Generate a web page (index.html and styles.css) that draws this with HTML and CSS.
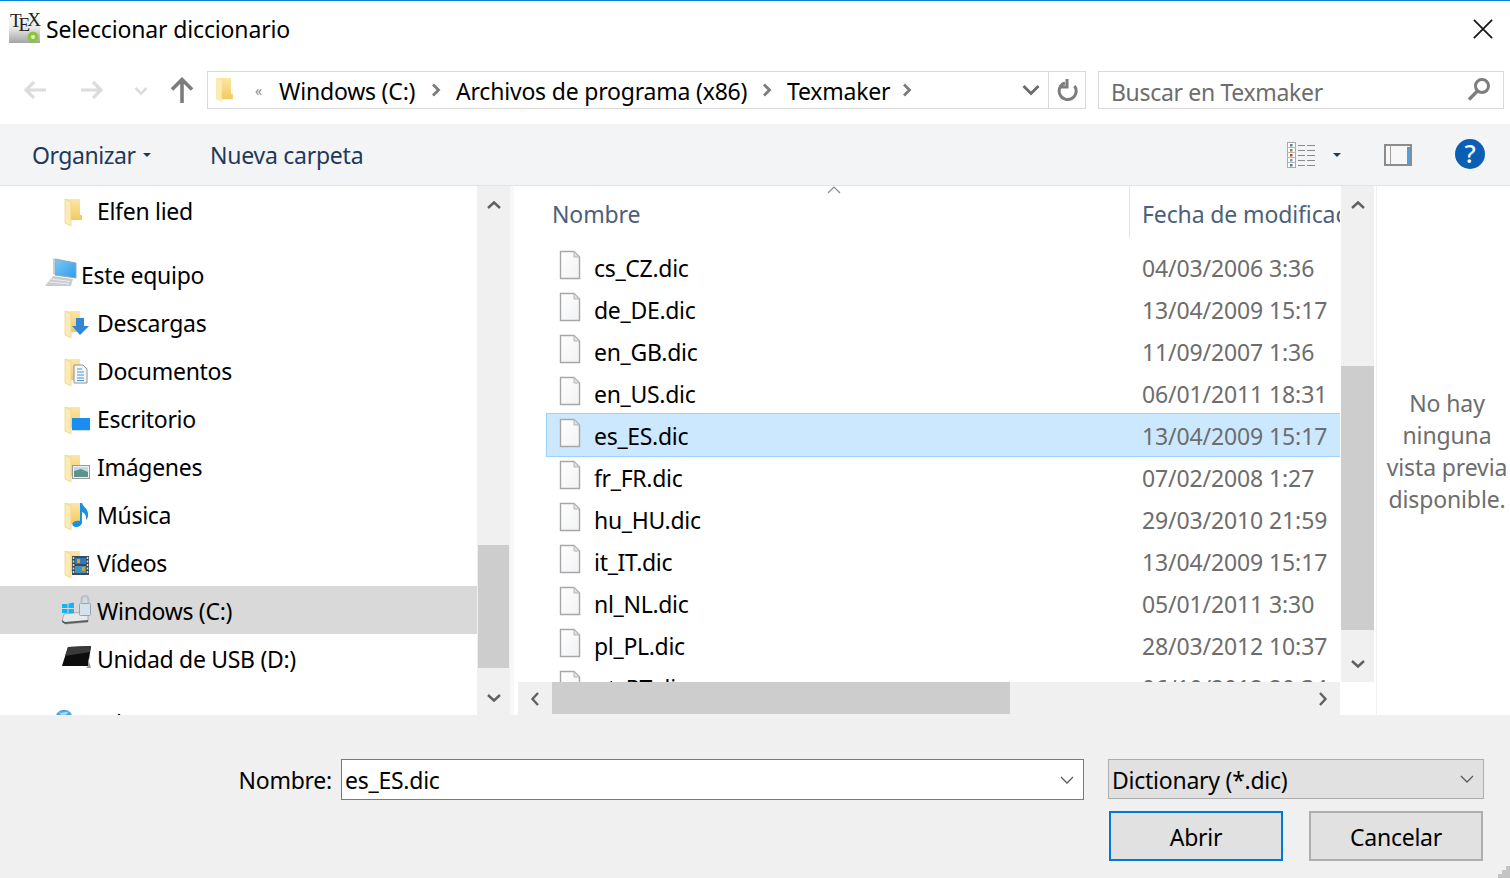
FILE: index.html
```html
<!DOCTYPE html>
<html lang="es">
<head>
<meta charset="utf-8">
<title>Seleccionar diccionario</title>
<link rel="stylesheet" href="styles.css">
</head>
<body>
<svg class="defs" width="0" height="0" aria-hidden="true">
  <defs>
    <linearGradient id="fy" x1="0" y1="0" x2="0" y2="1"><stop offset="0" stop-color="#fde7a6"/><stop offset="1" stop-color="#f3c95f"/></linearGradient>
    <linearGradient id="fp" x1="0" y1="0" x2="1" y2="1"><stop offset="0" stop-color="#ffffff"/><stop offset="1" stop-color="#f1f2f4"/></linearGradient>
    <linearGradient id="mon" x1="0" y1="0" x2="1" y2="1"><stop offset="0" stop-color="#7cc9f7"/><stop offset="1" stop-color="#2f9bea"/></linearGradient>
    <symbol id="folder" viewBox="0 0 34 30">
      <path d="M2 2H17V18H19V23H2Z" fill="url(#fy)"/>
      <path d="M2 2L8 5V29L2 26Z" fill="#fcebb4" stroke="#efd086" stroke-width=".7"/>
    </symbol>
    <symbol id="file" viewBox="0 0 22 30">
      <path d="M1.500 1.500H15L20.500 7V28.500H1.500Z" fill="url(#fp)" stroke="#a6a6a6" stroke-width="1.400"/>
      <path d="M15 1.500V7H20.500Z" fill="#e2e2e2" stroke="#b5b5b5"/>
    </symbol>
    <symbol id="chev" viewBox="0 0 16 10">
      <path d="M2 8L8 2.500L14 8" fill="none" stroke="#606060" stroke-width="2.400"/>
    </symbol>
  </defs>
</svg>

<div class="dialog">
  <header class="titlebar">
    <svg class="tex" viewBox="0 0 32 32">
      <defs><linearGradient id="tg" x1="0" y1="0" x2="0" y2="1"><stop offset="0" stop-color="#ffffff"/><stop offset=".5" stop-color="#e8e8e8"/><stop offset="1" stop-color="#a4a4a4"/></linearGradient></defs>
      <rect y="1" width="31" height="30" fill="url(#tg)"/>
      <text x="1" y="15" class="tex-t">T<tspan dy="4">E</tspan><tspan dy="-5">X</tspan></text>
      <circle cx="24" cy="25" r="5.500" fill="#8cc63f"/><circle cx="24" cy="25" r="2" fill="#e4f3c6"/>
    </svg>
    <span class="title">Seleccionar diccionario</span>
    <svg class="close" viewBox="0 0 22 22"><path d="M1 1L21 21M21 1L1 21" stroke="#1a1a1a" stroke-width="2" fill="none"/></svg>
  </header>

  <div class="addrbar">
    <svg class="nav-arrow back" viewBox="0 0 24 20"><path d="M23 10H3M11 2L3 10L11 18" fill="none" stroke="#dcdcdc" stroke-width="3.200"/></svg>
    <svg class="nav-arrow fwd" viewBox="0 0 24 20"><path d="M1 10H21M13 2L21 10L13 18" fill="none" stroke="#dcdcdc" stroke-width="3.200"/></svg>
    <svg class="hist" viewBox="0 0 14 10"><path d="M1.500 2L7 7.500L12.500 2" fill="none" stroke="#dcdcdc" stroke-width="2.600"/></svg>
    <svg class="up" viewBox="0 0 24 26"><path d="M12 26V3M2 12.500L12 2.500L22 12.500" fill="none" stroke="#7d7d7d" stroke-width="3.600"/></svg>
    <div class="crumbs">
      <svg class="crumb-folder" viewBox="0 0 20 28"><path d="M1 1H17V18H19V24H1Z" fill="url(#fy)"/><path d="M1 1L7 4V27L1 24Z" fill="#fcebb4"/></svg>
      <span class="more">«</span>
      <span class="crumb c1">Windows (C:)</span>
      <svg class="sep" viewBox="0 0 10 14"><path d="M2 1.500L7.500 7L2 12.500" fill="none" stroke="#7b7b7b" stroke-width="2.800"/></svg>
      <span class="crumb c2">Archivos de programa (x86)</span>
      <svg class="sep" viewBox="0 0 10 14"><path d="M2 1.500L7.500 7L2 12.500" fill="none" stroke="#7b7b7b" stroke-width="2.800"/></svg>
      <span class="crumb c3">Texmaker</span>
      <svg class="sep" viewBox="0 0 10 14"><path d="M2 1.500L7.500 7L2 12.500" fill="none" stroke="#7b7b7b" stroke-width="2.800"/></svg>
      <svg class="drop" viewBox="0 0 18 12"><path d="M1.500 2L9 9.500L16.500 2" fill="none" stroke="#6d6d6d" stroke-width="3"/></svg>
      <span class="refresh-box">
        <svg class="refresh" viewBox="0 0 22 24"><path d="M17.500 8A8.500 8.500 0 1 1 8 5" fill="none" stroke="#7d7d7d" stroke-width="3"/><path d="M10 1V9H2" fill="none" stroke="#7d7d7d" stroke-width="3"/></svg>
      </span>
    </div>
    <div class="search">
      <span class="search-text">Buscar en Texmaker</span>
      <svg class="lens" viewBox="0 0 24 24"><circle cx="15" cy="9" r="6.500" fill="none" stroke="#7d7d7d" stroke-width="3"/><path d="M10.500 14L2 22.500" stroke="#7d7d7d" stroke-width="3.400"/></svg>
    </div>
  </div>

  <div class="toolbar">
    <span class="tool organize">Organizar</span>
    <svg class="caret" viewBox="0 0 8 4"><path d="M0 0H8L4 4Z" fill="#1e395b"/></svg>
    <span class="tool newfolder">Nueva carpeta</span>
    <svg class="view" viewBox="0 0 28 26">
      <rect x=".5" y=".5" width="8" height="25" fill="#fff" stroke="#a9a9a9"/>
      <path d="M0 5.500H9M0 10.500H9M0 15.500H9M0 20.500H9" stroke="#b5b5b5"/>
      <rect x="3" y="2" width="2.500" height="2.500" fill="#4e7f96"/><rect x="3" y="7" width="2.500" height="2.500" fill="#8d8a2f"/><rect x="3" y="12" width="2.500" height="2.500" fill="#b5482a"/><rect x="3" y="17" width="2.500" height="2.500" fill="#7d9aa8"/><rect x="3" y="22" width="2.500" height="2.500" fill="#42819a"/>
      <path d="M11 3.500H18M20 3.500H28M11 8.500H18M20 8.500H28M11 13.500H18M20 13.500H28M11 18.500H18M20 18.500H28M11 23.500H18M20 23.500H28" stroke="#8a8a8a"/>
    </svg>
    <svg class="caret caret-view" viewBox="0 0 8 4"><path d="M0 0H8L4 4Z" fill="#1e395b"/></svg>
    <svg class="pane" viewBox="0 0 28 22">
      <rect x="1" y="1" width="26" height="20" fill="#f7f7f7" stroke="#8c8c8c" stroke-width="2"/>
      <path d="M6.500 1V21" stroke="#9b9b9b" stroke-width="1"/>
      <rect x="23" y="3" width="3" height="17" fill="#4ba0ea"/>
    </svg>
    <span class="help">?</span>
  </div>

  <main class="main">
    <div class="navcol">
      <nav class="tree">
        <div class="tree-row"><svg class="ti"><use href="#folder"/></svg><span>Elfen lied</span></div>
        <div class="tree-gap"></div>
        <div class="tree-row pc">
          <svg class="ti-pc" viewBox="0 0 36 30">
            <path d="M10 2L31 6V21L10 18Z" fill="url(#mon)" stroke="#9aa6b0"/>
            <path d="M8 1L10 2V18L8 17Z" fill="#c6ced4"/>
            <path d="M8 19L28 22L26 29H0Z" fill="#c9cccf"/>
            <path d="M6 22L25 24.500M4 25L24 27" stroke="#eceef0"/>
          </svg>
          <span>Este equipo</span>
        </div>
        <div class="tree-row"><svg class="ti"><use href="#folder"/><path d="M13 9H21V17H26L17 26L9 17H13Z" fill="#3286d6"/></svg><span>Descargas</span></div>
        <div class="tree-row"><svg class="ti"><use href="#folder"/><path d="M11 8H20L24 12V26H11Z" fill="#f4f6f8" stroke="#8d9499"/><path d="M14 12H19M14 15H21M14 18H21M14 21H21M14 23.500H21" stroke="#4596d6"/></svg><span>Documentos</span></div>
        <div class="tree-row"><svg class="ti"><use href="#folder"/><rect x="9" y="13" width="18" height="13" fill="#1b8df0"/><path d="M9 25.500H27" stroke="#bfe0fa"/></svg><span>Escritorio</span></div>
        <div class="tree-row"><svg class="ti"><use href="#folder"/><rect x="9.500" y="12.500" width="17" height="13" fill="#eef2f3" stroke="#9a9a9a"/><rect x="11" y="14" width="14" height="5" fill="#bcdcee"/><path d="M11 18L18 16L25 19V24H11Z" fill="#5f9288"/></svg><span>Imágenes</span></div>
        <div class="tree-row"><svg class="ti"><use href="#folder"/><path d="M17 2L19 2C20 6 26 8 25 15C24.700 17 24 18 23 19C23.500 15 22 12 19 11V21C19 24 16 26 13 26C10 26 9 24 9.500 22.500C10 20.500 14 19 17 20Z" fill="#1b8fe0"/></svg><span>Música</span></div>
        <div class="tree-row"><svg class="ti"><use href="#folder"/><rect x="9" y="7" width="17" height="19" fill="#3c4a55"/><rect x="12" y="9" width="11" height="6" fill="#2f78c0"/><rect x="12" y="17" width="11" height="7" fill="#3d92c8"/><path d="M14 10H17V14H14ZM19 18H22V22H19Z" fill="#d5a12f"/><path d="M10.500 8V25M24.500 8V25" stroke="#d8d8d8" stroke-width="1.500" stroke-dasharray="2 1.500"/></svg><span>Vídeos</span></div>
        <div class="tree-row drive selected">
          <svg class="ti-drive" viewBox="0 0 35 30">
            <path d="M0 9H5.500V13H0ZM6.500 8.500L12 7.500V13H6.500ZM0 14H5.500V18H0ZM6.500 14H12V19L6.500 18Z" fill="#12b4f2"/>
            <path d="M2 19L22 17L26 21V27L3 29L0 26Z" fill="#e6e8e9" stroke="#8c8c8c" stroke-width=".6"/>
            <path d="M0 25L3 27L26 25V27L3 29L0 27Z" fill="#55605b"/>
            <rect x="17.500" y="8.500" width="11" height="12" rx="1" fill="#d4e2ec" stroke="#8fa6b8"/>
            <path d="M19.500 8.500V5C19.500 -.5 26.500 -.5 26.500 5V8.500" fill="none" stroke="#b4c3cf" stroke-width="2.200"/>
          </svg>
          <span>Windows (C:)</span>
        </div>
        <div class="tree-row drive">
          <svg class="ti-drive" viewBox="0 0 35 30">
            <path d="M6 4L29 3L26 23H0Z" fill="#0d0d0d"/>
            <path d="M26 15L29 25H24L26 23Z" fill="#9c9c9c"/>
            <path d="M6 4L29 3L28 9L3 13Z" fill="#3a3a3a"/>
          </svg>
          <span>Unidad de USB (D:)</span>
        </div>
        <div class="tree-gap"></div>
        <div class="tree-row net">
          <svg class="ti-net" viewBox="0 0 24 24"><circle cx="12" cy="12" r="10" fill="#4ea5d8"/><path d="M6 5C10 7 14 3 17 5C15 9 9 11 6 5Z" fill="#a5d7ee"/></svg>
          <span>Red</span>
        </div>
      </nav>
      <div class="vbar">
        <div class="arrow a-up"><svg class="chev"><use href="#chev"/></svg></div>
        <div class="navbar-gap"></div>
        <div class="thumb navbar-thumb"></div>
        <div class="fill"></div>
        <div class="arrow a-dn"><svg class="chev flip"><use href="#chev"/></svg></div>
      </div>
    </div>

    <section class="listcol">
      <div class="listtop">
        <div class="files">
          <div class="head">
            <span class="h-name">Nombre</span>
            <svg class="sort" viewBox="0 0 14 8"><path d="M1 7L7 1L13 7" fill="none" stroke="#8a8a8a" stroke-width="1.200"/></svg>
            <span class="h-date">Fecha de modificación</span>
          </div>
          <div class="row"><svg class="fi"><use href="#file"/></svg><span>cs_CZ.dic</span><time>04/03/2006 3:36</time></div>
          <div class="row"><svg class="fi"><use href="#file"/></svg><span>de_DE.dic</span><time>13/04/2009 15:17</time></div>
          <div class="row"><svg class="fi"><use href="#file"/></svg><span>en_GB.dic</span><time>11/09/2007 1:36</time></div>
          <div class="row"><svg class="fi"><use href="#file"/></svg><span>en_US.dic</span><time>06/01/2011 18:31</time></div>
          <div class="row sel"><svg class="fi"><use href="#file"/></svg><span>es_ES.dic</span><time>13/04/2009 15:17</time></div>
          <div class="row"><svg class="fi"><use href="#file"/></svg><span>fr_FR.dic</span><time>07/02/2008 1:27</time></div>
          <div class="row"><svg class="fi"><use href="#file"/></svg><span>hu_HU.dic</span><time>29/03/2010 21:59</time></div>
          <div class="row"><svg class="fi"><use href="#file"/></svg><span>it_IT.dic</span><time>13/04/2009 15:17</time></div>
          <div class="row"><svg class="fi"><use href="#file"/></svg><span>nl_NL.dic</span><time>05/01/2011 3:30</time></div>
          <div class="row"><svg class="fi"><use href="#file"/></svg><span>pl_PL.dic</span><time>28/03/2012 10:37</time></div>
          <div class="row"><svg class="fi"><use href="#file"/></svg><span>pt_PT.dic</span><time>06/10/2012 20:34</time></div>
        </div>
        <div class="vbar list-vbar">
          <div class="arrow a-up"><svg class="chev"><use href="#chev"/></svg></div>
          <div class="listbar-gap"></div>
          <div class="thumb listbar-thumb"></div>
          <div class="fill"></div>
          <div class="arrow a-dn"><svg class="chev flip"><use href="#chev"/></svg></div>
        </div>
      </div>
      <div class="hbar">
        <div class="harrow"><svg class="hchev" viewBox="0 0 10 16"><path d="M8 2L2.500 8L8 14" fill="none" stroke="#606060" stroke-width="2.400"/></svg></div>
        <div class="hthumb"></div>
        <div class="fill"></div>
        <div class="harrow"><svg class="hchev" viewBox="0 0 10 16"><path d="M2 2L7.500 8L2 14" fill="none" stroke="#606060" stroke-width="2.400"/></svg></div>
      </div>
    </section>

    <aside class="preview">No hay<br>ninguna<br>vista previa<br>disponible.</aside>
  </main>

  <footer class="footer">
    <div class="frow">
      <label class="flabel">Nombre:</label>
      <div class="input"><span>es_ES.dic</span><svg class="thin" viewBox="0 0 14 8"><path d="M1 1L7 7L13 1" fill="none" stroke="#5a5a5a" stroke-width="1.300"/></svg></div>
      <div class="combo"><span>Dictionary (*.dic)</span><svg class="thin" viewBox="0 0 14 8"><path d="M1 1L7 7L13 1" fill="none" stroke="#5a5a5a" stroke-width="1.300"/></svg></div>
    </div>
    <div class="frow btns">
      <button class="btn primary">Abrir</button>
      <button class="btn">Cancelar</button>
    </div>
    <svg class="grip" viewBox="0 0 12 12"><path d="M8 0h4v4H8zM4 4h4v4H4zM8 4h4v4H8zM0 8h4v4H0zM4 8h4v4H4zM8 8h4v4H8z" fill="#c4c4c4"/></svg>
  </footer>
</div>
</body>
</html>
```
FILE: styles.css
```css
* { box-sizing: border-box; }
html, body { margin: 0; height: 100%; }
body {
  font-family: "Noto Sans", "Open Sans", sans-serif;
  font-size: 23px;
  letter-spacing: -.12px;
  color: #000;
  background: #fff;
  overflow: hidden;
}
.defs { position: absolute; }
svg { display: block; flex: none; }

.dialog { width: 1510px; height: 878px; display: flex; flex-direction: column; border-top: 1px solid #0a84d8; }

/* title */
.titlebar { height: 57px; display: flex; align-items: center; padding: 0 16px 0 9px; flex: none; }
.tex { width: 32px; height: 32px; margin-top: -3px; }
.tex-t { font-family: "Liberation Serif", serif; font-size: 19px; letter-spacing: -3px; fill: #222; }
.title { margin-left: 5px; margin-top: -1px; letter-spacing: -.15px; }
.close { width: 20px; height: 20px; margin-left: auto; margin-top: -2px; margin-right: 1px; }

/* address */
.addrbar { height: 66px; flex: none; display: flex; align-items: flex-start; padding-top: 13px; }
.nav-arrow { width: 24px; height: 20px; margin-top: 9px; }
.back { margin-left: 23px; }
.fwd { margin-left: 33px; }
.hist { width: 14px; height: 10px; margin: 15px 0 0 30px; }
.up { width: 24px; height: 26px; margin: 6px 0 0 22px; }
.crumbs { width: 879px; height: 38px; margin-left: 13px; border: 1px solid #d9d9d9; display: flex; align-items: center; padding-left: 7px; }
.crumb-folder { width: 19px; height: 26px; }
.more { width: 10px; margin-left: 21px; font-size: 14px; color: #8a8a8a; flex: none; }
.crumb { white-space: nowrap; flex: none; padding-top: 1px; letter-spacing: -.2px; }
.c1 { width: 152px; margin-left: 14px; }
.c2 { width: 306px; margin-left: 15px; }
.c3 { width: 115px; margin-left: 15px; }
.sep { width: 10px; height: 14px; }
.drop { width: 18px; height: 12px; margin-left: 110px; }
.refresh-box { height: 36px; width: 38px; margin-left: 8px; border-left: 1px solid #d9d9d9; display: flex; align-items: center; justify-content: center; flex: none; }
.refresh { width: 22px; height: 24px; }
.search { width: 406px; height: 38px; margin-left: 12px; border: 1px solid #d9d9d9; display: flex; align-items: center; padding: 0 12px; justify-content: space-between; }
.search-text { color: #6d6d6d; padding-top: 3px; letter-spacing: -.33px; }
.lens { width: 24px; height: 24px; margin-top: -2px; }

/* toolbar */
.toolbar { height: 62px; flex: none; background: #f3f4f6; border-bottom: 1px solid #e2e3e5; display: flex; align-items: center; padding-left: 32px; }
.tool { color: #1e395b; white-space: nowrap; padding-top: 1px; letter-spacing: -.25px; }
.organize { width: 111px; letter-spacing: -.45px; }
.caret { width: 8px; height: 4px; }
.newfolder { margin-left: 59px; }
.view { width: 28px; height: 26px; margin-left: auto; }
.caret-view { margin-left: 18px; }
.pane { width: 28px; height: 22px; margin-left: 43px; }
.help { width: 30px; height: 30px; border-radius: 50%; background: #0a5fb4; color: #fff; margin: -2px 25px 0 43px; display: flex; align-items: center; justify-content: center; font-size: 25px; font-weight: 500; line-height: 1; }

/* main */
.main { height: 529px; flex: none; display: flex; overflow: hidden; }
.navcol { width: 510px; display: flex; flex: none; }
.tree { width: 477px; overflow: hidden; letter-spacing: -.3px; }
.tree-row { height: 48px; display: flex; align-items: center; padding: 4px 0 0 63px; white-space: nowrap; }
.tree-row span { margin-top: -2px; }
.tree-gap { height: 16px; }
.ti { width: 34px; height: 30px; overflow: visible; }
.tree-row.pc { padding-left: 45px; }
.ti-pc { width: 36px; height: 30px; margin-top: -8px; }
.tree-row.drive { padding-left: 62px; }
.ti-drive { width: 35px; height: 30px; margin-top: -4px; }
.selected { background: #d9d9d9; }
.tree-row.net { padding-left: 54px; }
.ti-net { width: 20px; height: 30px; margin: -12px 7px 0 0; }

.vbar { width: 33px; flex: none; background: #f0f0f0; display: flex; flex-direction: column; align-items: center; }
.arrow { height: 38px; width: 100%; display: flex; align-items: center; justify-content: center; flex: none; }
.a-dn { height: 34px; }
.chev { width: 16px; height: 10px; }
.flip { transform: scaleY(-1); }
.thumb { width: 31px; background: #cdcdcd; flex: none; }
.fill { flex: 1; }
.navbar-gap { height: 321px; flex: none; }
.navbar-thumb { height: 123px; }

/* list */
.listcol { width: 867px; flex: none; border-left: 4px solid #f8f8f8; border-right: 1px solid #f0f0f0; display: flex; flex-direction: column; }
.listtop { height: 496px; flex: none; display: flex; padding-right: 3px; }
.files { width: 826px; margin-right: 1px; overflow: hidden; flex: none; }
.head { height: 60px; position: relative; color: #4c607a; white-space: nowrap; }
.h-name { position: absolute; left: 38px; top: 12px; }
.h-date { position: absolute; left: 627px; top: 12px; padding-left: 1px; }
.head::after { content: ""; position: absolute; left: 615px; top: 0; width: 1px; height: 52px; background: #e5e5e5; }
.sort { position: absolute; left: 313px; top: 0; width: 14px; height: 8px; }
.row { height: 42px; margin-left: 33px; padding: 2px 0 0 12px; display: grid; grid-template-columns: 35px 548px 1fr; align-items: center; white-space: nowrap; }
.row span { letter-spacing: -.3px; }
.row.sel { background: #cce8ff; outline: 1px solid #99d1ff; }
.fi { width: 22px; height: 30px; margin-top: -6px; }
.row time { color: #6d6d6d; }
.list-vbar { height: 496px; }
.list-vbar .a-dn { height: 36px; }
.listbar-gap { height: 142px; flex: none; }
.listbar-thumb { height: 264px; width: 33px; }

.hbar { height: 33px; width: 822px; margin-left: 4px; flex: none; background: #f0f0f0; display: flex; align-items: flex-start; }
.harrow { width: 34px; height: 33px; display: flex; align-items: center; justify-content: center; flex: none; }
.hchev { width: 10px; height: 16px; }
.hthumb { width: 458px; height: 32px; background: #cdcdcd; flex: none; }

.preview { flex: 1; display: flex; align-items: center; justify-content: center; text-align: center; color: #6d6d6d; line-height: 32px; padding: 0 0 0 7px; white-space: nowrap; }

/* footer */
.footer { position: relative; flex: 1; background: #f0f0f0; padding: 44px 26px 0 0; letter-spacing: -.25px; }
.frow { display: flex; justify-content: flex-end; align-items: flex-start; }
.flabel { margin-right: 9px; line-height: 42px; }
.input { width: 743px; height: 41px; background: #fff; border: 1px solid #7a7a7a; display: flex; align-items: center; justify-content: space-between; padding: 0 9px 0 3px; }
.combo { width: 376px; height: 40px; margin-left: 24px; background: #e1e1e1; border: 1px solid #adadad; display: flex; align-items: center; justify-content: space-between; padding: 2px 9px 0 3px; }
.thin { width: 14px; height: 8px; margin-top: -2px; }
.input .thin { margin-top: 0; }
.btns { gap: 26px; margin-top: 10px; padding-right: 1px; }
.btn { width: 174px; height: 50px; background: #e1e1e1; border: 2px solid #adadad; font: inherit; letter-spacing: inherit; color: #000; padding: 2px 0 0; }
.primary { border-color: #0078d7; }
.grip { position: absolute; right: 0; bottom: 0; width: 12px; height: 12px; }
```
